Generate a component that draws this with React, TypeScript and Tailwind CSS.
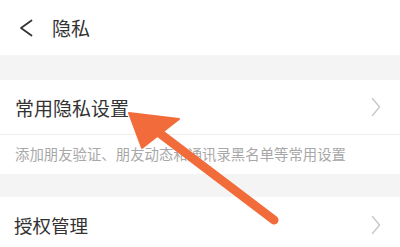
// Privacy settings screen with a callout arrow over the first row

const FONT = { fontFamily: '"Noto Sans CJK SC", "Noto Sans", sans-serif' };

function BackChevron() {
  return (
    <svg width="14" height="18" viewBox="0 0 14 18" className="shrink-0">
      <polyline points="12.5,1.5 2,9 12.5,16.5" fill="none" stroke="#333" strokeWidth="1.8" strokeLinecap="round" strokeLinejoin="round" />
    </svg>
  );
}

function RowChevron() {
  return (
    <svg width="10" height="20" viewBox="0 0 10 20" className="shrink-0">
      <polyline points="1.5,1.5 8.5,10 1.5,18.5" fill="none" stroke="#c8c8c8" strokeWidth="1.4" strokeLinecap="round" strokeLinejoin="round" />
    </svg>
  );
}

export default function App() {
  return (
    <div className="relative w-[400px] h-[247px] overflow-hidden bg-white" style={FONT}>
      {/* header */}
      <header className="h-[55px] flex items-center pl-[19px]">
        <BackChevron />
        <span className="ml-[19px] text-[19px] text-[#333] leading-none">隐私</span>
      </header>

      <div className="h-[25px] bg-[#f4f4f4]" />

      {/* common privacy */}
      <div className="flex items-center justify-between h-[55px] pl-[15px] pr-[19px] border-b border-[#eeeeee]">
        <span className="text-[19px] text-[#333] leading-none">常用隐私设置</span>
        <RowChevron />
      </div>
      <div className="h-[39px] flex items-center pl-[15px]">
        <span className="text-[14.4px] text-[#a8a8a8] leading-none">添加朋友验证、朋友动态和通讯录黑名单等常用设置</span>
      </div>

      <div className="h-[23px] bg-[#f4f4f4]" />

      {/* authorization */}
      <div className="flex items-center justify-between h-[56px] pl-[14px] pr-[19px]">
        <span className="text-[18.5px] text-[#333] leading-none">授权管理</span>
        <RowChevron />
      </div>

      {/* callout arrow */}
      <svg className="absolute inset-0 pointer-events-none" width="400" height="247" viewBox="0 0 400 247">
        <line x1="158" y1="132" x2="274" y2="220" stroke="#f26b3a" strokeWidth="9" strokeLinecap="round" />
        <polygon points="129,113 179,119 142,148" fill="#f26b3a" strokeLinejoin="round" stroke="#f26b3a" strokeWidth="2" />
      </svg>
    </div>
  );
}
